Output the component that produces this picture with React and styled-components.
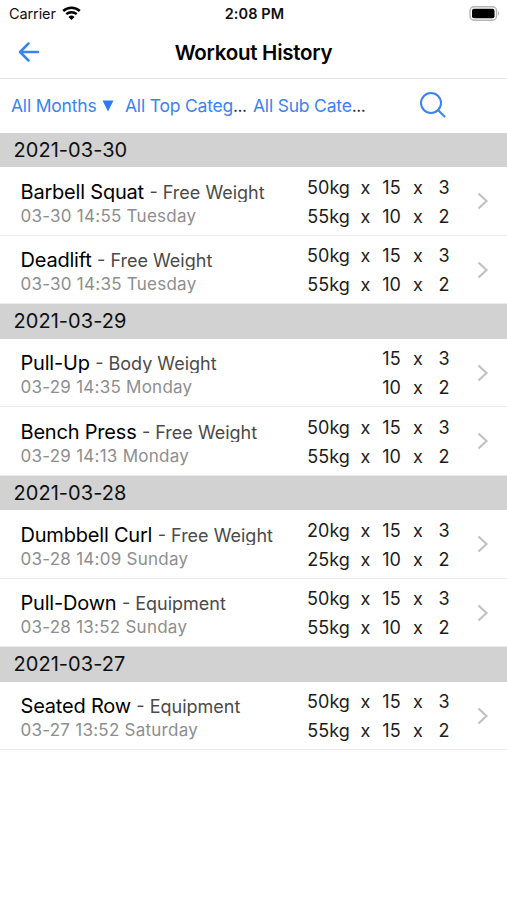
import React from 'react'
import styled, { createGlobalStyle } from 'styled-components'

const GlobalStyle = createGlobalStyle`
  body {
    margin: 0;
    background: #ffffff;
    font-family: Inter, 'Liberation Sans', sans-serif;
    color: #0f0f0f;
  }
`

const Screen = styled.div`
  width: 507px;
  height: 900px;
  overflow: hidden;
  background: #ffffff;
`

const StatusBar = styled.div`
  display: grid;
  grid-template-columns: 1fr auto 1fr;
  align-items: center;
  box-sizing: border-box;
  height: 26px;
  padding: 1px 7px 0 9px;
  line-height: 20px;
`

const Carrier = styled.div`
  display: flex;
  align-items: center;
  gap: 6px;
  font-size: 14.5px;
  letter-spacing: -0.1px;
`

const Clock = styled.div`
  font-size: 14.5px;
  font-weight: 600;
  letter-spacing: 0.1px;
`

const BatteryIcon = styled.svg`
  justify-self: end;
`

const NavBar = styled.div`
  display: grid;
  grid-template-columns: 60px 1fr 60px;
  align-items: center;
  box-sizing: border-box;
  height: 53px;
  border-bottom: 1px solid #e4e4e4;
`

const BackIcon = styled.svg`
  margin-left: 18px;
`

const Title = styled.h1`
  margin: 0;
  padding-top: 1px;
  text-align: center;
  font-size: 20.5px;
  font-weight: 600;
  line-height: 26px;
  letter-spacing: -0.25px;
  color: #000000;
`

const Filters = styled.div`
  display: flex;
  align-items: center;
  box-sizing: border-box;
  height: 54px;
  padding-left: 11px;
`

const Filter = styled.div`
  display: flex;
  align-items: center;
  flex: 0 0 ${props => props.width}px;
  font-size: 17.5px;
  line-height: 24px;
  letter-spacing: -0.2px;
  white-space: nowrap;
  color: #3b82f2;
`

const Dots = styled.span`
  letter-spacing: -0.5px;
  color: #333333;
`

const Caret = styled.svg`
  margin-left: 6px;
`

const SearchIcon = styled.svg`
  margin: -3px 0 0 40px;
`

const DayHeader = styled.h2`
  box-sizing: border-box;
  height: 34.4px;
  margin: 0;
  padding-left: 13.5px;
  font-size: 20px;
  font-weight: 400;
  line-height: 35px;
  letter-spacing: 0.05px;
  background: #d2d2d2;
`

const Row = styled.div`
  display: flex;
  box-sizing: border-box;
  height: 68.5px;
  padding: 5.6px 18px 0 20.5px;
  border-bottom: 1px solid #ebebeb;
`

const Info = styled.div`
  flex: 1;
  padding-top: 7px;
  white-space: nowrap;
`

const Name = styled.div`
  height: 22px;
  overflow: hidden;
  font-size: 20px;
  line-height: 25px;
  letter-spacing: -0.2px;
  color: #000000;
`

const Kind = styled.span`
  font-size: 18px;
  letter-spacing: 0px;
  color: #4a4a4a;
`

const Time = styled.div`
  font-size: 17px;
  line-height: 22px;
  margin-top: 3px;
  letter-spacing: 0.25px;
  color: #8e8e8e;
`

const Sets = styled.div`
  display: grid;
  grid-template-columns: 43px 31px 21px 32px 20px;
  grid-auto-rows: 29px;
  align-items: center;
  justify-items: center;
  flex: none;
  margin-right: 23px;
  font-size: 18px;
  letter-spacing: 0px;
  white-space: nowrap;
  color: #1c1c1c;
`

const Chevron = styled.svg`
  flex: none;
  margin-top: 19.5px;
`

const HISTORY = [
  {
    date: '2021-03-30',
    workouts: [
      { name: 'Barbell Squat', kind: 'Free Weight', time: '03-30 14:55 Tuesday', sets: [['50kg', 15, 3], ['55kg', 10, 2]] },
      { name: 'Deadlift', kind: 'Free Weight', time: '03-30 14:35 Tuesday', sets: [['50kg', 15, 3], ['55kg', 10, 2]] }
    ]
  },
  {
    date: '2021-03-29',
    workouts: [
      { name: 'Pull-Up', kind: 'Body Weight', time: '03-29 14:35 Monday', sets: [['', 15, 3], ['', 10, 2]] },
      { name: 'Bench Press', kind: 'Free Weight', time: '03-29 14:13 Monday', sets: [['50kg', 15, 3], ['55kg', 10, 2]] }
    ]
  },
  {
    date: '2021-03-28',
    workouts: [
      { name: 'Dumbbell Curl', kind: 'Free Weight', time: '03-28 14:09 Sunday', sets: [['20kg', 15, 3], ['25kg', 10, 2]] },
      { name: 'Pull-Down', kind: 'Equipment', time: '03-28 13:52 Sunday', sets: [['50kg', 15, 3], ['55kg', 10, 2]] }
    ]
  },
  {
    date: '2021-03-27',
    workouts: [
      { name: 'Seated Row', kind: 'Equipment', time: '03-27 13:52 Saturday', sets: [['50kg', 15, 3], ['55kg', 15, 2]] }
    ]
  }
]

const Workout = ({ name, kind, time, sets }) => (
  <Row>
    <Info>
      <Name>
        {name} <Kind>- {kind}</Kind>
      </Name>
      <Time>{time}</Time>
    </Info>
    <Sets>
      {sets.map(([weight, reps, count], i) => (
        <React.Fragment key={i}>
          <span>{weight}</span>
          <span>{weight && 'x'}</span>
          <span>{reps}</span>
          <span>x</span>
          <span>{count}</span>
        </React.Fragment>
      ))}
    </Sets>
    <Chevron width='12' height='18' viewBox='0 0 12 18' fill='none' stroke='#c2c2c4' strokeWidth='2.2'>
      <path d='M1.5 1.5 L9.5 9 L1.5 16.5' />
    </Chevron>
  </Row>
)

const App = () => {
  return (
    <Screen>
      <GlobalStyle />
      <StatusBar>
        <Carrier>
          Carrier
          <svg width='19' height='15' viewBox='0 0 19 15' fill='none' stroke='#000000' strokeWidth='2.5'>
            <path d='M1.2 5 A12 12 0 0 1 17.8 5' />
            <path d='M4.3 8.2 A7.6 7.6 0 0 1 14.7 8.2' />
            <path d='M9.5 14 L6.5 10.9 A4.3 4.3 0 0 1 12.5 10.9 Z' fill='#000000' stroke='none' />
          </svg>
        </Carrier>
        <Clock>2:08 PM</Clock>
        <BatteryIcon width='31' height='15' viewBox='0 0 31 15'>
          <rect x='1' y='0.8' width='26.5' height='13.4' rx='4' fill='#ffffff' stroke='#b4b4b4' strokeWidth='1.4' />
          <rect x='3' y='2.8' width='22.5' height='9.4' rx='2' fill='#000000' />
          <path d='M29 5 Q31 7.5 29 10 Z' fill='#b4b4b4' />
        </BatteryIcon>
      </StatusBar>
      <NavBar>
        <BackIcon width='22' height='20' viewBox='0 0 22 20' fill='none' stroke='#3b82f2' strokeWidth='2.5' strokeLinecap='round' strokeLinejoin='round'>
          <path d='M20 10 H2 M10.5 1.5 L2 10 L10.5 18.5' />
        </BackIcon>
        <Title>Workout History</Title>
      </NavBar>
      <Filters>
        <Filter width={114}>
          All Months
          <Caret width='12' height='12' viewBox='0 0 12 12' fill='#2f7af5'>
            <path d='M0.5 0.5 H11.5 L6 11.5 Z' />
          </Caret>
        </Filter>
        <Filter width={128}>All Top Categ<Dots>...</Dots></Filter>
        <Filter width={126}>All Sub Cate<Dots>...</Dots></Filter>
        <SearchIcon width='28' height='28' viewBox='0 0 28 28' fill='none' stroke='#3b82f2' strokeWidth='2' strokeLinecap='round'>
          <circle cx='12' cy='12' r='10' />
          <path d='M19.2 19.2 L25.5 25.5' />
        </SearchIcon>
      </Filters>
      {HISTORY.map(day => (
        <div key={day.date}>
          <DayHeader>{day.date}</DayHeader>
          {day.workouts.map(workout => (
            <Workout key={workout.time} {...workout} />
          ))}
        </div>
      ))}
    </Screen>
  )
}

export default App
